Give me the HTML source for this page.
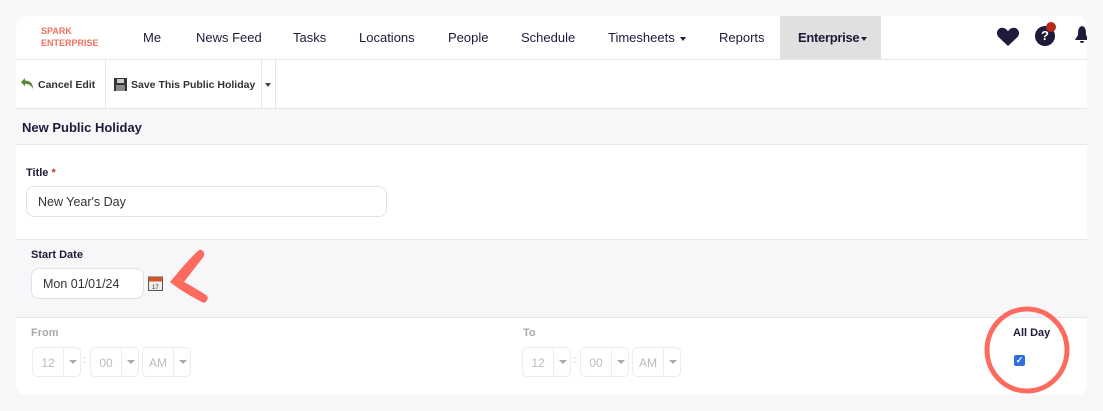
<!DOCTYPE html>
<html><head><meta charset="utf-8"><style>
*{margin:0;padding:0;box-sizing:border-box}
body{width:1103px;height:411px;background:#f7f7f9;font-family:"Liberation Sans",sans-serif;position:relative;overflow:hidden;color:#1e1b3a}
.card{position:absolute;left:16px;top:16px;width:1071px;height:379px;background:#fff;border-radius:10px;overflow:hidden}
.a{position:absolute}
.nav{font-size:13px;color:#1e1b3a;top:30px}
.hl{position:absolute;left:0;width:1071px;height:1px;background:#e6e6ea}
.lbl{font-size:11px;font-weight:bold}
.inp{position:absolute;border:1px solid #e2e2e6;border-radius:8px;background:#fff;font-size:12.5px;color:#333;padding-left:11px;display:flex;align-items:center}
.sel{position:absolute;top:331px;width:49px;height:30px;border:1px solid #ececef;border-radius:5px;font-size:12px;color:#bbb}
.sel span{position:absolute;left:0;width:30px;text-align:center;top:8px}
.sel i{position:absolute;left:30px;top:0;height:28px;width:1px;background:#ececef}
.sel b{position:absolute;left:36px;top:12px;border-left:4px solid transparent;border-right:4px solid transparent;border-top:4px solid #aaa}
.caret{display:inline-block;border-left:3.5px solid transparent;border-right:3.5px solid transparent;border-top:4px solid #1e1b3a;vertical-align:middle;margin-left:5px}
</style></head><body>
<div class="card">
 <div class="a" style="left:25px;top:9px;font-size:9px;line-height:12px;color:#f0705f;font-weight:bold">SPARK<br>ENTERPRISE</div>
 <div class="a nav" style="left:127px;top:14px">Me</div>
 <div class="a nav" style="left:180px;top:14px">News Feed</div>
 <div class="a nav" style="left:277px;top:14px">Tasks</div>
 <div class="a nav" style="left:343px;top:14px">Locations</div>
 <div class="a nav" style="left:432px;top:14px">People</div>
 <div class="a nav" style="left:505px;top:14px">Schedule</div>
 <div class="a nav" style="left:592px;top:14px">Timesheets<span class="caret"></span></div>
 <div class="a nav" style="left:703px;top:14px">Reports</div>
 <div class="a" style="left:764px;top:0;width:101px;height:43px;background:#e0e0e0"></div>
 <div class="a nav" style="left:782px;top:14px;font-weight:bold;letter-spacing:-0.3px">Enterprise<span class="caret" style="margin-left:2px"></span></div>
 <svg class="a" style="left:980px;top:10px" width="24" height="22" viewBox="0 0 24 22"><path d="M12 20 L2.5 11 C-1 7 2 1.5 6.5 1.8 C9 2 10.8 3.5 12 5.3 C13.2 3.5 15 2 17.5 1.8 C22 1.5 25 7 21.5 11 Z" fill="#1e1b3a"/></svg>
 <div class="a" style="left:1019px;top:10px;width:20px;height:20px;border-radius:50%;background:#1e1b3a;color:#fff;font-size:13px;font-weight:bold;text-align:center;line-height:20px">?</div>
 <div class="a" style="left:1030px;top:6px;width:10px;height:10px;border-radius:50%;background:#b22a1a"></div>
 <svg class="a" style="left:1058px;top:9px" width="16" height="22" viewBox="0 0 16 22"><path d="M8 1 C4 2 4 6 4 10 L1 15 L15 15 L12 10 C12 6 12 2 8 1Z M6 16 h4 a2 2 0 0 1 -4 0Z" fill="#1e1b3a"/></svg>
 <div class="hl" style="top:43px"></div>
 <svg class="a" style="left:4px;top:62px" width="14" height="12" viewBox="0 0 14 12"><path d="M1 4 L5 0 L5 2.5 C10 2.5 13 5 13 11 C11 7 9 6 5 6 L5 8.5 Z" fill="#5a8a3a"/></svg>
 <div class="a" style="left:22px;top:63px;font-size:10.5px;font-weight:bold;color:#333">Cancel Edit</div>
 <div class="a" style="left:89px;top:44px;width:1px;height:48px;background:#e6e6ea"></div>
 <svg class="a" style="left:98px;top:62px" width="13" height="13" viewBox="0 0 13 13"><rect width="13" height="13" fill="#333"/><rect x="3" y="1" width="7" height="4" fill="#ccc"/><rect x="2" y="7" width="9" height="6" fill="#888"/></svg>
 <div class="a" style="left:115px;top:63px;font-size:10.5px;font-weight:bold;color:#333">Save This Public Holiday</div>
 <div class="a" style="left:245px;top:44px;width:1px;height:48px;background:#e6e6ea"></div>
 <div class="a" style="left:249px;top:67px;border-left:3.5px solid transparent;border-right:3.5px solid transparent;border-top:4px solid #444"></div>
 <div class="a" style="left:259px;top:44px;width:1px;height:48px;background:#e6e6ea"></div>
 <div class="hl" style="top:92px"></div>
 <div class="a" style="left:0;top:93px;width:1071px;height:35px;background:#f7f7f9"></div>
 <div class="a" style="left:6px;top:104px;font-size:13px;font-weight:bold">New Public Holiday</div>
 <div class="hl" style="top:128px"></div>
 <div class="a lbl" style="left:10px;top:151px">Title <span style="color:#c0392b">*</span></div>
 <div class="inp" style="left:10px;top:170px;width:361px;height:31px">New Year's Day</div>
 <div class="hl" style="top:223px"></div>
 <div class="a" style="left:0;top:224px;width:1071px;height:77px;background:#f7f7f9"></div>
 <div class="a lbl" style="left:15px;top:233px">Start Date</div>
 <div class="inp" style="left:15px;top:252px;width:113px;height:31px">Mon 01/01/24</div>
 <svg class="a" style="left:132px;top:260px" width="15" height="15" viewBox="0 0 15 15"><rect x="0.5" y="1" width="14" height="13.5" fill="#eee" stroke="#555"/><rect x="0.5" y="1" width="14" height="4.5" fill="#d2552a"/><text x="4" y="13" font-size="6" fill="#333" font-family="Liberation Sans">17</text></svg>
 <div class="hl" style="top:301px"></div>
 <div class="a lbl" style="left:15px;top:311px;color:#aaa">From</div>
 <div class="sel" style="left:16px"><span>12</span><i></i><b></b></div>
 <div class="a" style="left:67px;top:338px;font-size:11px;color:#bbb">:</div>
 <div class="sel" style="left:74px"><span>00</span><i></i><b></b></div>
 <div class="sel" style="left:126px"><span>AM</span><i></i><b></b></div>
 <div class="a lbl" style="left:507px;top:311px;color:#aaa">To</div>
 <div class="sel" style="left:506px"><span>12</span><i></i><b></b></div>
 <div class="a" style="left:557px;top:338px;font-size:11px;color:#bbb">:</div>
 <div class="sel" style="left:564px"><span>00</span><i></i><b></b></div>
 <div class="sel" style="left:616px"><span>AM</span><i></i><b></b></div>
 <div class="a lbl" style="left:997px;top:311px">All Day</div>
 <div class="a" style="left:998px;top:339px;width:11px;height:11px;border-radius:2px;background:#2f6fe0;color:#fff;font-size:9px;line-height:11px;text-align:center;font-weight:bold">✓</div>
</div>
<svg class="a" style="left:0;top:0" width="1103" height="411">
 <path d="M198 251 C190 258 180 270 170 282 C180 290 192 297 204 303 C208 301 209 297 206 295 C198 290 190 285 184 282 C190 274 198 264 204 256 C205 251 201 248 198 251 Z" fill="#fd6a5e"/>
 <ellipse cx="1027" cy="350" rx="40" ry="41" fill="none" stroke="#fd6a5e" stroke-width="5"/>
</svg>
</body></html>
